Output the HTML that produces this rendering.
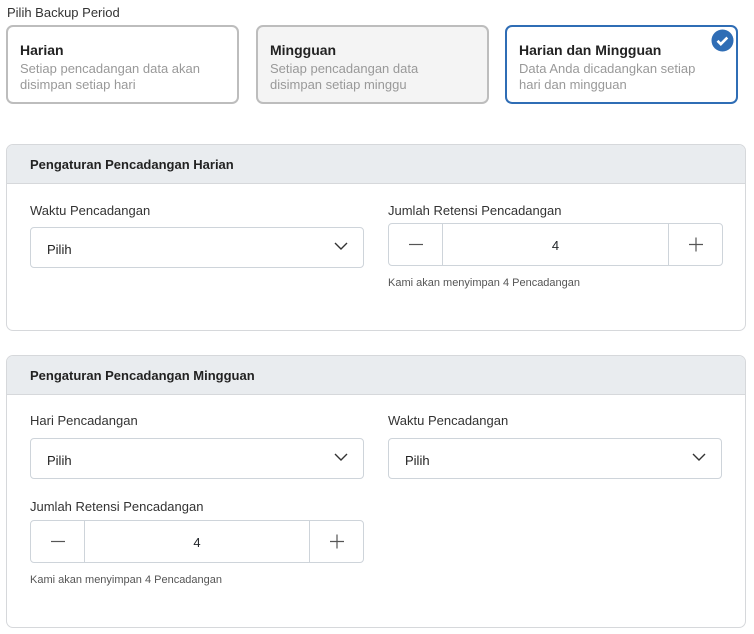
<!DOCTYPE html>
<html><head><style>
*{box-sizing:border-box;margin:0;padding:0}
body{width:754px;height:634px;background:#fff;font-family:"Liberation Sans",sans-serif;color:#212529;position:relative;overflow:hidden}
.a{position:absolute}
.lbl{font-size:13px;color:#333}
.card{position:absolute;top:25px;width:233px;height:79px;border:2px solid #bdbdbd;border-radius:7px;padding:15px 12px}
.card b{display:block;font-size:14px;color:#222;margin-bottom:3px}
.card span{display:block;font-size:13px;color:#999;line-height:16px}
.panel{position:absolute;left:6px;width:740px;border:1px solid #d6d8db;border-radius:7px;overflow:hidden}
.ph{height:39px;background:#e9ecef;border-bottom:1px solid #d6d8db;padding:12px 23px;font-size:13px;font-weight:bold;color:#222}
.sel{position:absolute;width:334px;height:41px;border:1px solid #ced4da;border-radius:4px;font-size:13px;padding:14px 16px;color:#222}
.sel svg{position:absolute;right:15px;top:14px}
.step{position:absolute;width:335px;height:43px;border:1px solid #ced4da;border-radius:4px;font-size:13px}
.step .m,.step .p{position:absolute;top:0;width:54px;height:41px}
.step .m{left:0;border-right:1px solid #ced4da}
.step .p{right:0;border-left:1px solid #ced4da}
.step .v{position:absolute;left:54px;right:54px;top:14px;text-align:center}
.help{position:absolute;font-size:11px;color:#555}
</style></head><body>
<div class="a lbl" style="left:7px;top:5px">Pilih Backup Period</div>
<div class="card" style="left:6px"><b>Harian</b><span>Setiap pencadangan data akan<br>disimpan setiap hari</span></div>
<div class="card" style="left:256px;background:#f4f4f4"><b>Mingguan</b><span>Setiap pencadangan data<br>disimpan setiap minggu</span></div>
<div class="card" style="left:505px;border-color:#2f6db5"><b>Harian dan Mingguan</b><span>Data Anda dicadangkan setiap<br>hari dan mingguan</span></div>
<svg class="a" style="left:711px;top:29px" width="23" height="23"><circle cx="11.5" cy="11.5" r="11" fill="#2f6db5"/><path d="M6.5 11.8l3.3 3.3 6.5-6.5" stroke="#fff" stroke-width="2.6" fill="none"/></svg>

<div class="panel" style="top:144px;height:187px"><div class="ph">Pengaturan Pencadangan Harian</div></div>
<div class="a lbl" style="left:30px;top:203px">Waktu Pencadangan</div>
<div class="sel" style="left:30px;top:227px">Pilih<svg width="14" height="9"><path d="M1 1l6 6 6-6" stroke="#333" stroke-width="1.4" fill="none"/></svg></div>
<div class="a lbl" style="left:388px;top:203px">Jumlah Retensi Pencadangan</div>
<div class="step" style="left:388px;top:223px"><div class="m"><svg width="54" height="41"><path d="M20 20.5h14" stroke="#555" stroke-width="1.2"/></svg></div><div class="v">4</div><div class="p"><svg width="54" height="41"><path d="M20 20.5h14M27 13.5v14" stroke="#555" stroke-width="1.2"/></svg></div></div>
<div class="help" style="left:388px;top:277px">Kami akan menyimpan 4 Pencadangan</div>

<div class="panel" style="top:355px;height:273px"><div class="ph">Pengaturan Pencadangan Mingguan</div></div>
<div class="a lbl" style="left:30px;top:413px">Hari Pencadangan</div>
<div class="sel" style="left:30px;top:438px">Pilih<svg width="14" height="9"><path d="M1 1l6 6 6-6" stroke="#333" stroke-width="1.4" fill="none"/></svg></div>
<div class="a lbl" style="left:388px;top:413px">Waktu Pencadangan</div>
<div class="sel" style="left:388px;top:438px">Pilih<svg width="14" height="9"><path d="M1 1l6 6 6-6" stroke="#333" stroke-width="1.4" fill="none"/></svg></div>
<div class="a lbl" style="left:30px;top:499px">Jumlah Retensi Pencadangan</div>
<div class="step" style="left:30px;top:520px;width:334px"><div class="m"><svg width="54" height="41"><path d="M20 20.5h14" stroke="#555" stroke-width="1.2"/></svg></div><div class="v">4</div><div class="p"><svg width="54" height="41"><path d="M20 20.5h14M27 13.5v14" stroke="#555" stroke-width="1.2"/></svg></div></div>
<div class="help" style="left:30px;top:574px">Kami akan menyimpan 4 Pencadangan</div>
</body></html>
